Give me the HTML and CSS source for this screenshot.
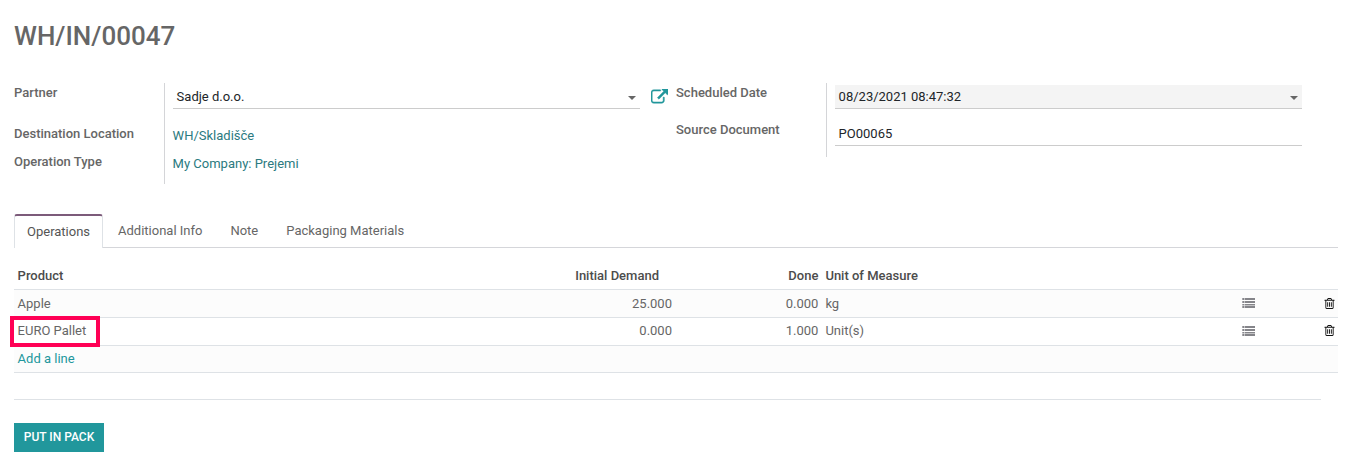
FILE: index.html
```html
<!DOCTYPE html>
<html lang="en">
<head>
<meta charset="utf-8">
<title>WH/IN/00047</title>
<link rel="stylesheet" href="styles.css">
</head>
<body>
<svg class="defs" width="0" height="0">
  <symbol id="external" viewBox="0 128 1792 1536"><path transform="translate(0 64)" d="M1408 928v320q0 119-84.500 203.500t-203.500 84.500h-832q-119 0-203.500-84.500t-84.500-203.500v-832q0-119 84.500-203.500t203.500-84.500h704q14 0 23 9t9 23v64q0 14-9 23t-23 9h-704q-66 0-113 47t-47 113v832q0 66 47 113t113 47h832q66 0 113-47t47-113v-320q0-14 9-23t23-9h64q14 0 23 9t9 23zm384-864v512q0 26-19 45t-45 19-45-19l-176-176-652 652q-10 10-23 10t-23-10l-114-114q-10-10-10-23t10-23l652-652-176-176q-19-19-19-45t19-45 45-19h512q26 0 45 19t19 45z"/></symbol>
  <symbol id="trash" viewBox="192 128 1408 1536"><path d="M704 736v576q0 14-9 23t-23 9h-64q-14 0-23-9t-9-23v-576q0-14 9-23t23-9h64q14 0 23 9t9 23zm256 0v576q0 14-9 23t-23 9h-64q-14 0-23-9t-9-23v-576q0-14 9-23t23-9h64q14 0 23 9t9 23zm256 0v576q0 14-9 23t-23 9h-64q-14 0-23-9t-9-23v-576q0-14 9-23t23-9h64q14 0 23 9t9 23zm128 724v-948h-896v948q0 22 7 40.500t14.500 27 10.500 8.500h832q3 0 10.500-8.500t14.500-27 7-40.500zm-672-1076h448l-48-117q-7-9-17-11h-317q-10 2-17 11zm928 32v64q0 14-9 23t-23 9h-96v948q0 83-47 143.500t-113 60.500h-832q-66 0-113-58.500t-47-141.500v-952h-96q-14 0-23-9t-9-23v-64q0-14 9-23t23-9h309l70-167q15-37 54-63t79-26h320q40 0 79 26t54 63l70 167h309q14 0 23 9t9 23z"/></symbol>
  <symbol id="list" viewBox="0 0 13 10"><path d="M.3 0h2.200v2H.3zM3 0h10v2H3zM.3 3h2.200v2H.3zM3 3h10v2H3zM.3 6h2.200v1.500H.3zM3 6h10v1.500H3zM.3 8h2.200v2H.3zM3 8h10v2H3z"/></symbol>
</svg>
<main class="sheet">
  <h1 class="title">WH/IN/00047</h1>
  <div class="groups">
    <section class="group group-left">
      <div class="labels">
        <label class="label-partner">Partner</label>
        <label class="label-dest">Destination Location</label>
        <label>Operation Type</label>
      </div>
      <div class="values">
        <div class="partner">
          <div class="input"><span>Sadje d.o.o.</span><i class="caret"></i></div>
          <svg class="external"><use href="#external"/></svg>
        </div>
        <a class="link link-dest">WH/Skladišče</a>
        <a class="link">My Company: Prejemi</a>
      </div>
    </section>
    <section class="group group-right">
      <div class="labels">
        <label class="label-date">Scheduled Date</label>
        <label>Source Document</label>
      </div>
      <div class="values">
        <div class="input input-date"><span>08/23/2021 08:47:32</span><i class="caret"></i></div>
        <div class="input input-source"><span>PO00065</span></div>
      </div>
    </section>
  </div>
  <nav class="tabs">
    <a class="tab active">Operations</a>
    <a class="tab">Additional Info</a>
    <a class="tab">Note</a>
    <a class="tab">Packaging Materials</a>
  </nav>
  <div class="table">
    <div class="row head"><span>Product</span><span class="num demand">Initial Demand</span><span class="num">Done</span><span class="unit">Unit of Measure</span></div>
    <div class="row odd"><span>Apple</span><span class="num">25.000</span><span class="num">0.000</span><span class="unit">kg</span><svg class="list"><use href="#list"/></svg><svg class="trash"><use href="#trash"/></svg></div>
    <div class="row even"><span class="marked">EURO Pallet</span><span class="num">0.000</span><span class="num">1.000</span><span class="unit">Unit(s)</span><svg class="list"><use href="#list"/></svg><svg class="trash"><use href="#trash"/></svg></div>
    <div class="row add"><a>Add a line</a></div>
  </div>
  <hr class="divider">
  <button class="button">PUT IN PACK</button>
</main>
</body>
</html>
```
FILE: styles.css
```css
* { box-sizing: border-box; }
body {
  margin: 0;
  background: #fff;
  color: #666;
  font: 13px/20px Roboto, "Noto Sans", sans-serif;
}
.defs { display: block; }
.sheet { padding: 16px 12px 0 14px; }
.title {
  margin: 0;
  font-size: 26px;
  font-weight: 500;
  line-height: 40px;
  color: #666;
}
.groups { display: flex; margin-top: 27px; height: 101px; }
.group { display: flex; align-items: flex-start; }
.group-left { width: 662px; }
.group-right { width: 626px; }
.labels {
  display: flex;
  flex-direction: column;
  flex: none;
  width: 151px;
  height: 101px;
  border-right: 1px solid #d4d5d8;
  font-weight: 500;
}
.group-right .labels { height: 74px; }
.label-partner { margin-bottom: 21px; }
.label-dest { margin-bottom: 8px; }
.label-date { margin-bottom: 17px; }
.values {
  display: flex;
  flex-direction: column;
  flex: 1;
  padding: 2px 0 0 7.6px;
}
.partner { display: flex; }
.input {
  display: flex;
  align-items: center;
  justify-content: space-between;
  width: 467px;
  height: 24px;
  padding: 0 4px;
  border-bottom: 1px solid #ccc;
  color: #212529;
}
.input-date { background: #f4f4f4; }
.input-source { margin-top: 13px; }
.caret {
  margin-top: 2px;
  border: 4px solid transparent;
  border-top-color: #666;
  border-bottom: 0;
}
.external {
  width: 17px;
  height: 15px;
  margin: 4px 0 0 11.6px;
  overflow: visible;
  fill: #21979c;
  stroke: #21979c;
  stroke-width: 50px;
}
.link { color: #2b7a80; }
.link-dest { margin: 17px 0 8px; }
.tabs {
  display: flex;
  height: 34px;
  margin-top: 30px;
  border-bottom: 1px solid #d5d6da;
}
.tab { height: 33px; padding: 7px 14px 0; }
.tab.active {
  width: 89px;
  height: 34px;
  padding: 6px 0 0 12px;
  border: 1px solid #dee2e6;
  border-top: 2px solid #7c5b7a;
  border-bottom: 0;
  border-radius: 3px 3px 0 0;
  background: #fff;
  color: #555;
}
.tab.active + .tab { padding-left: 15px; }
.table { margin-top: 14px; }
.row {
  display: grid;
  grid-template-columns: 483.4px 171px 146.4px 423.6px 82px 14px;
  align-items: center;
  height: 28px;
  padding-left: 3.6px;
  border-bottom: 1px solid #dee2e6;
}
.head { font-weight: 500; color: #4c4c4c; }
.odd { background: #fcfcfc; }
.even { padding-bottom: 2px; }
.add { height: 27px; background: #fcfcfc; color: #21979c; }
.num { text-align: right; }
.demand { padding-right: 13px; }
.unit { padding-left: 7px; }
.list { width: 13px; height: 10px; margin-top: -1px; fill: #85858a; }
.even .list { margin-top: 1px; }
.trash { width: 11px; height: 11px; fill: #111; }
.marked { position: relative; }
.marked::after {
  content: "";
  position: absolute;
  left: -7.6px;
  top: -5px;
  width: 90px;
  height: 31px;
  border: 4px solid #ff0055;
}
.divider { width: 1307px; margin: 26px 0 0; border: 0; border-top: 1px solid #dee2e6; }
.button {
  display: block;
  width: 90px;
  height: 29px;
  margin-top: 23px;
  padding: 0;
  border: 0;
  background: #21979c;
  color: #fff;
  font: 500 12px/29px Roboto, sans-serif;
}
.marked::after { box-sizing: border-box; }
```
